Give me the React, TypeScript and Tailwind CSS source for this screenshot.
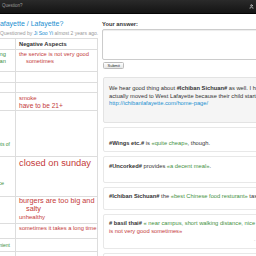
import { User } from "lucide-react";

const red = "text-[#c43a3a]";
const green = "text-[#3f9142]";

function Tag({ text, size, className = "" }: { text: string; size: string; className?: string }) {
  return <div className={`${size} ${className} pl-[7px] indent-[-7px]`}>{text}</div>;
}

export default function App() {
  return (
    <div className="w-[256px] h-[256px] overflow-hidden bg-white font-['Liberation_Sans',Arial,sans-serif] text-[#333]">
      <nav className="h-[14px] bg-gradient-to-b from-[#2a2a2a] to-[#141414] border-b border-[#050505] flex items-center justify-between">
        <span className="text-[4.5px] text-[#9a9a9a] ml-[2px]">Question?</span>
        <User className="w-[5px] h-[5px] text-[#ddd] mr-[2px]" strokeWidth={3} />
      </nav>

      <div className="flex">
        {/* left: question + aspects table */}
        <div className="w-[98px] shrink-0 pt-[6px]">
          <h1 className="text-[7px] leading-[8px] text-[#1b8fd0] ml-[-4px] whitespace-nowrap">Lafayette / Lafayette?</h1>
          <p className="text-[5px] leading-[6px] text-[#999] mt-[2px] whitespace-nowrap">
            Questioned by <span className="text-[#1b8fd0]">Ji Soo Yi</span> almost 2 years ago.
          </p>

          <table className="mt-[2px] ml-[-45px] w-[143px] border-collapse table-fixed text-[5.75px]">
            <colgroup>
              <col className="w-[60px]" />
              <col />
            </colgroup>
            <thead>
              <tr className="h-[11px]">
                <th className="border border-[#ddd]"></th>
                <th className="border border-[#ddd] text-left font-bold pl-[3px] leading-[7px]">Negative Aspects</th>
              </tr>
            </thead>
            <tbody className="align-top">
              <tr className="h-[22px]">
                <td className={`border border-[#ddd] ${green} text-right pr-[9px] leading-[7px] pt-[1px]`}>
                  amazing<br />Sichuan
                </td>
                <td className={`border border-[#ddd] pl-[3px] leading-[7px] pt-[0.5px] ${red}`}>
                  <Tag text="the service is not very good sometimes" size="text-[5.75px]" />
                </td>
              </tr>
              <tr className="h-[11px]">
                <td className="border border-[#ddd]"></td>
                <td className="border border-[#ddd]"></td>
              </tr>
              <tr className="h-[10px]">
                <td className="border border-[#ddd]"></td>
                <td className="border border-[#ddd]"></td>
              </tr>
              <tr className="h-[17px]">
                <td className="border border-[#ddd]"></td>
                <td className={`border border-[#ddd] pl-[3px] pt-[2px] ${red}`}>
                  <Tag text="smoke" size="text-[6px] leading-[7px]" />
                  <Tag text="have to be 21+" size="text-[6.6px] leading-[8px]" />
                </td>
              </tr>
              <tr className="h-[46px]">
                <td className={`border border-[#ddd] ${green} text-right pr-[5px] text-[5px] leading-[7px] pt-[30px]`}>
                  lots of
                </td>
                <td className="border border-[#ddd]"></td>
              </tr>
              <tr className="h-[40px]">
                <td className={`border border-[#ddd] ${green} text-right pr-[11px] text-[5.5px] leading-[7px] pt-[23px]`}>
                  nice
                </td>
                <td className={`border border-[#ddd] pl-[3px] pt-[1px] ${red}`}>
                  <Tag text="closed on sunday" size="text-[9.25px] leading-[11px]" />
                </td>
              </tr>
              <tr className="h-[27px]">
                <td className="border border-[#ddd]"></td>
                <td className={`border border-[#ddd] pl-[3px] ${red}`}>
                  <Tag text="burgers are too big and salty" size="text-[7.3px] leading-[8px]" />
                  <Tag text="unhealthy" size="text-[6px] leading-[8px]" />
                </td>
              </tr>
              <tr className="h-[15px]">
                <td className="border border-[#ddd]"></td>
                <td className={`border border-[#ddd] pl-[3px] pt-[1px] ${red}`}>
                  <Tag text="sometimes it takes a long time" size="text-[5.75px] leading-[6px]" />
                </td>
              </tr>
              <tr className="h-[13px]">
                <td className={`border border-[#ddd] ${green} text-right pr-[5px] text-[5px] leading-[7px] pt-[3px]`}>
                  convenient
                </td>
                <td className="border border-[#ddd]"></td>
              </tr>
              <tr className="h-[14px]">
                <td className="border border-[#ddd]"></td>
                <td className="border border-[#ddd]"></td>
              </tr>
            </tbody>
          </table>
        </div>

        {/* right: answer form + answers */}
        <div className="w-[320px] shrink-0 ml-[4px] pt-[7px]">
          <div className="text-[5.75px] leading-[7px] font-bold">Your answer:</div>
          <div className="mt-[1px] h-[31px] border border-[#ccc] rounded-[2px] shadow-[inset_0_1px_1px_rgba(0,0,0,0.075)] bg-white"></div>
          <button className="block mt-[2px] ml-[1px] h-[7px] px-[3.5px] text-[4px] leading-[5px] border border-[#bbb] rounded-[1.5px] bg-gradient-to-b from-white to-[#e6e6e6] text-[#333]">
            Submit
          </button>

          <div className="mt-[8px] ml-[1px] flex flex-col gap-[4px] text-[5.75px] leading-[7.5px]">
            <div className="bg-[#f5f5f5] border border-[#e3e3e3] rounded-[2px] px-[5px] pt-[7px] pb-[14px] whitespace-nowrap">
              <div>
                We hear good thing about <b>#Ichiban Sichuan#</b> as well. I have heard a family
              </div>
              <div>actually moved to West Lafayette because their child started school here.</div>
              <div className="text-[#1b8fd0]">http://ichibanlafayette.com/home-page/</div>
            </div>

            <div className="border border-[#e8e8e8] rounded-[2px] px-[5px] pt-[12px] pb-[4px] whitespace-nowrap">
              <b>#Wings etc.#</b> is <span className={green}>«quite cheap»</span>, though.
            </div>
            <div className="border border-[#e8e8e8] rounded-[2px] px-[5px] pt-[6px] pb-[11px] whitespace-nowrap">
              <b>#Uncorked#</b> provides <span className={green}>«a decent meal»</span>.
            </div>
            <div className="border border-[#e8e8e8] rounded-[2px] px-[5px] pt-[5px] pb-[9px] whitespace-nowrap">
              <b>#Ichiban Sichuan#</b> the <span className={green}>«best Chinese food resturant»</span> taste really good.
            </div>
            <div className="border border-[#e8e8e8] rounded-[2px] px-[5px] pt-[5px] pb-[3px] whitespace-nowrap">
              <div>
                <b># basil thai#</b> <span className={green}>« near campus, short walking distance, nice atmosphere</span>
              </div>
              <div className={red}>is not very good sometimes»</div>
              <div className="text-[4px] leading-[10px] text-[#999] pl-[145px]">- by</div>
            </div>
            <div className="border border-[#e8e8e8] rounded-[2px] h-[20px]"></div>
          </div>
        </div>
      </div>
    </div>
  );
}
